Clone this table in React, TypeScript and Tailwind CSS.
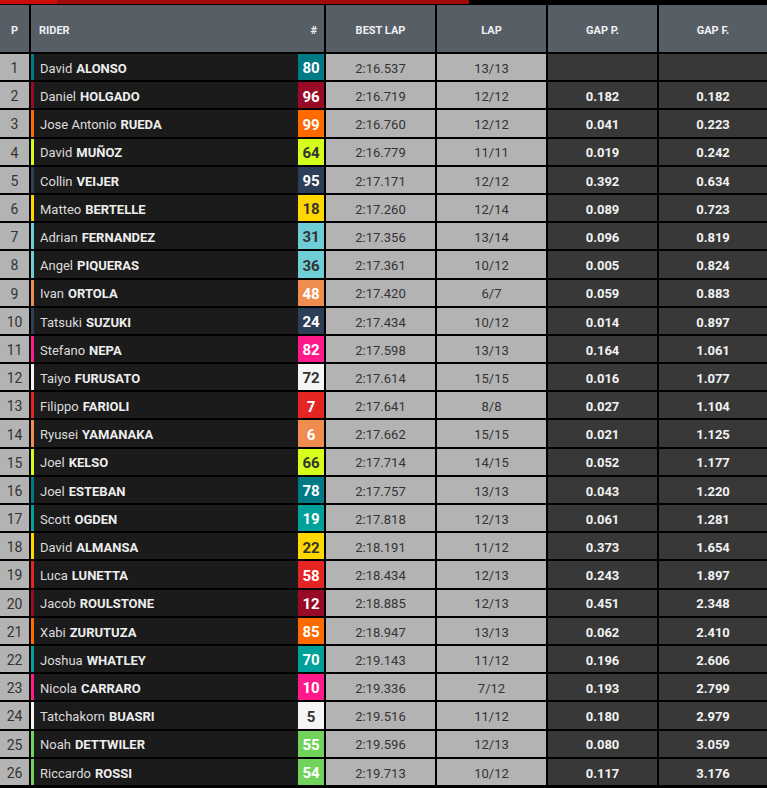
import React from "react";

type Row = {
  p: number;
  first: string;
  last: string;
  num: string;
  color: string;
  dark: boolean;
  best: string;
  lap: string;
  gapP: string;
  gapF: string;
};

const TEAL = "#007a85";
const DRED = "#990a26";
const ORANGE = "#ff6a00";
const LIME = "#d4ff1c";
const NAVY = "#2d3e57";
const YELLOW = "#ffd800";
const CYAN = "#6fcdd5";
const PEACH = "#ef8d50";
const PINK = "#ff1a8c";
const WHITE = "#f5f5f5";
const RED = "#e52424";
const TEAL2 = "#00a19a";
const GREEN = "#72d35c";

const rows: Row[] = [
  { p: 1, first: "David", last: "ALONSO", num: "80", color: TEAL, dark: false, best: "2:16.537", lap: "13/13", gapP: "", gapF: "" },
  { p: 2, first: "Daniel", last: "HOLGADO", num: "96", color: DRED, dark: false, best: "2:16.719", lap: "12/12", gapP: "0.182", gapF: "0.182" },
  { p: 3, first: "Jose Antonio", last: "RUEDA", num: "99", color: ORANGE, dark: false, best: "2:16.760", lap: "12/12", gapP: "0.041", gapF: "0.223" },
  { p: 4, first: "David", last: "MUÑOZ", num: "64", color: LIME, dark: true, best: "2:16.779", lap: "11/11", gapP: "0.019", gapF: "0.242" },
  { p: 5, first: "Collin", last: "VEIJER", num: "95", color: NAVY, dark: false, best: "2:17.171", lap: "12/12", gapP: "0.392", gapF: "0.634" },
  { p: 6, first: "Matteo", last: "BERTELLE", num: "18", color: YELLOW, dark: true, best: "2:17.260", lap: "12/14", gapP: "0.089", gapF: "0.723" },
  { p: 7, first: "Adrian", last: "FERNANDEZ", num: "31", color: CYAN, dark: true, best: "2:17.356", lap: "13/14", gapP: "0.096", gapF: "0.819" },
  { p: 8, first: "Angel", last: "PIQUERAS", num: "36", color: CYAN, dark: true, best: "2:17.361", lap: "10/12", gapP: "0.005", gapF: "0.824" },
  { p: 9, first: "Ivan", last: "ORTOLA", num: "48", color: PEACH, dark: false, best: "2:17.420", lap: "6/7", gapP: "0.059", gapF: "0.883" },
  { p: 10, first: "Tatsuki", last: "SUZUKI", num: "24", color: NAVY, dark: false, best: "2:17.434", lap: "10/12", gapP: "0.014", gapF: "0.897" },
  { p: 11, first: "Stefano", last: "NEPA", num: "82", color: PINK, dark: false, best: "2:17.598", lap: "13/13", gapP: "0.164", gapF: "1.061" },
  { p: 12, first: "Taiyo", last: "FURUSATO", num: "72", color: WHITE, dark: true, best: "2:17.614", lap: "15/15", gapP: "0.016", gapF: "1.077" },
  { p: 13, first: "Filippo", last: "FARIOLI", num: "7", color: RED, dark: false, best: "2:17.641", lap: "8/8", gapP: "0.027", gapF: "1.104" },
  { p: 14, first: "Ryusei", last: "YAMANAKA", num: "6", color: PEACH, dark: false, best: "2:17.662", lap: "15/15", gapP: "0.021", gapF: "1.125" },
  { p: 15, first: "Joel", last: "KELSO", num: "66", color: LIME, dark: true, best: "2:17.714", lap: "14/15", gapP: "0.052", gapF: "1.177" },
  { p: 16, first: "Joel", last: "ESTEBAN", num: "78", color: TEAL, dark: false, best: "2:17.757", lap: "13/13", gapP: "0.043", gapF: "1.220" },
  { p: 17, first: "Scott", last: "OGDEN", num: "19", color: TEAL2, dark: false, best: "2:17.818", lap: "12/13", gapP: "0.061", gapF: "1.281" },
  { p: 18, first: "David", last: "ALMANSA", num: "22", color: YELLOW, dark: true, best: "2:18.191", lap: "11/12", gapP: "0.373", gapF: "1.654" },
  { p: 19, first: "Luca", last: "LUNETTA", num: "58", color: RED, dark: false, best: "2:18.434", lap: "12/13", gapP: "0.243", gapF: "1.897" },
  { p: 20, first: "Jacob", last: "ROULSTONE", num: "12", color: DRED, dark: false, best: "2:18.885", lap: "12/13", gapP: "0.451", gapF: "2.348" },
  { p: 21, first: "Xabi", last: "ZURUTUZA", num: "85", color: ORANGE, dark: false, best: "2:18.947", lap: "13/13", gapP: "0.062", gapF: "2.410" },
  { p: 22, first: "Joshua", last: "WHATLEY", num: "70", color: TEAL2, dark: false, best: "2:19.143", lap: "11/12", gapP: "0.196", gapF: "2.606" },
  { p: 23, first: "Nicola", last: "CARRARO", num: "10", color: PINK, dark: false, best: "2:19.336", lap: "7/12", gapP: "0.193", gapF: "2.799" },
  { p: 24, first: "Tatchakorn", last: "BUASRI", num: "5", color: WHITE, dark: true, best: "2:19.516", lap: "11/12", gapP: "0.180", gapF: "2.979" },
  { p: 25, first: "Noah", last: "DETTWILER", num: "55", color: GREEN, dark: false, best: "2:19.596", lap: "12/13", gapP: "0.080", gapF: "3.059" },
  { p: 26, first: "Riccardo", last: "ROSSI", num: "54", color: GREEN, dark: false, best: "2:19.713", lap: "10/12", gapP: "0.117", gapF: "3.176" },
];

const GRID = "grid grid-cols-[29px_293px_109px_109px_109px_108px] gap-x-[2px]";

export default function App() {
  return (
    <div
      className="min-h-screen w-[767px] bg-black"
      style={{ fontFamily: "Roboto, 'Noto Sans', sans-serif" }}
    >
      <div className="flex h-[4px]">
        <div className="w-[57px] bg-[#cc0b0b]" />
        <div className="w-[412px] bg-[#a20a0a]" />
      </div>
      <div className="mt-[1px] flex flex-col gap-y-[2px]">
        <div className={`${GRID} h-[47px] text-[11px] font-bold text-[#eef0f2]`}>
          <div className="flex items-center justify-center bg-[#575e66] pt-[5px]">P</div>
          <div className="flex items-center justify-between bg-[#575e66] pl-[8px] pr-[7px] pt-[5px]">
            <span>RIDER</span>
            <span>#</span>
          </div>
          <div className="flex items-center justify-center bg-[#575e66] pt-[5px]">BEST LAP</div>
          <div className="flex items-center justify-center bg-[#575e66] pt-[5px]">LAP</div>
          <div className="flex items-center justify-center bg-[#575e66] pt-[5px]">GAP P.</div>
          <div className="flex items-center justify-center bg-[#575e66] pt-[5px]">GAP F.</div>
        </div>
        {rows.map((r) => (
          <div key={r.p} className={`${GRID} h-[26.2px]`}>
            <div className="flex items-center justify-center bg-[#b3b3b3] pt-[3px] text-[14px] text-[#333333]">
              {r.p}
            </div>
            <div className="flex items-stretch bg-[#1b1b1b]">
              <div className="w-[3px]" style={{ backgroundColor: r.color }} />
              <div className="flex flex-1 items-center pl-[6px] pt-[3px] text-[13px] text-[#dcdcdc]">
                <span>{r.first}</span>
                <span className="ml-[4px] font-bold text-[#eeeeee]">{r.last}</span>
              </div>
              <div
                className={`flex w-[26px] items-center justify-center pt-[3px] text-[15px] font-bold ${
                  r.dark ? "text-[#333333]" : "text-white"
                }`}
                style={{ backgroundColor: r.color }}
              >
                {r.num}
              </div>
            </div>
            <div className="flex items-center justify-center bg-[#b3b3b3] pt-[3px] text-[13px] text-[#333333]">
              {r.best}
            </div>
            <div className="flex items-center justify-center bg-[#b3b3b3] pt-[3px] text-[13px] text-[#333333]">
              {r.lap}
            </div>
            <div className="flex items-center justify-center bg-[#383838] pt-[3px] text-[13px] font-bold text-[#f2f2f2]">
              {r.gapP}
            </div>
            <div className="flex items-center justify-center bg-[#383838] pt-[3px] text-[13px] font-bold text-[#f2f2f2]">
              {r.gapF}
            </div>
          </div>
        ))}
      </div>
    </div>
  );
}
